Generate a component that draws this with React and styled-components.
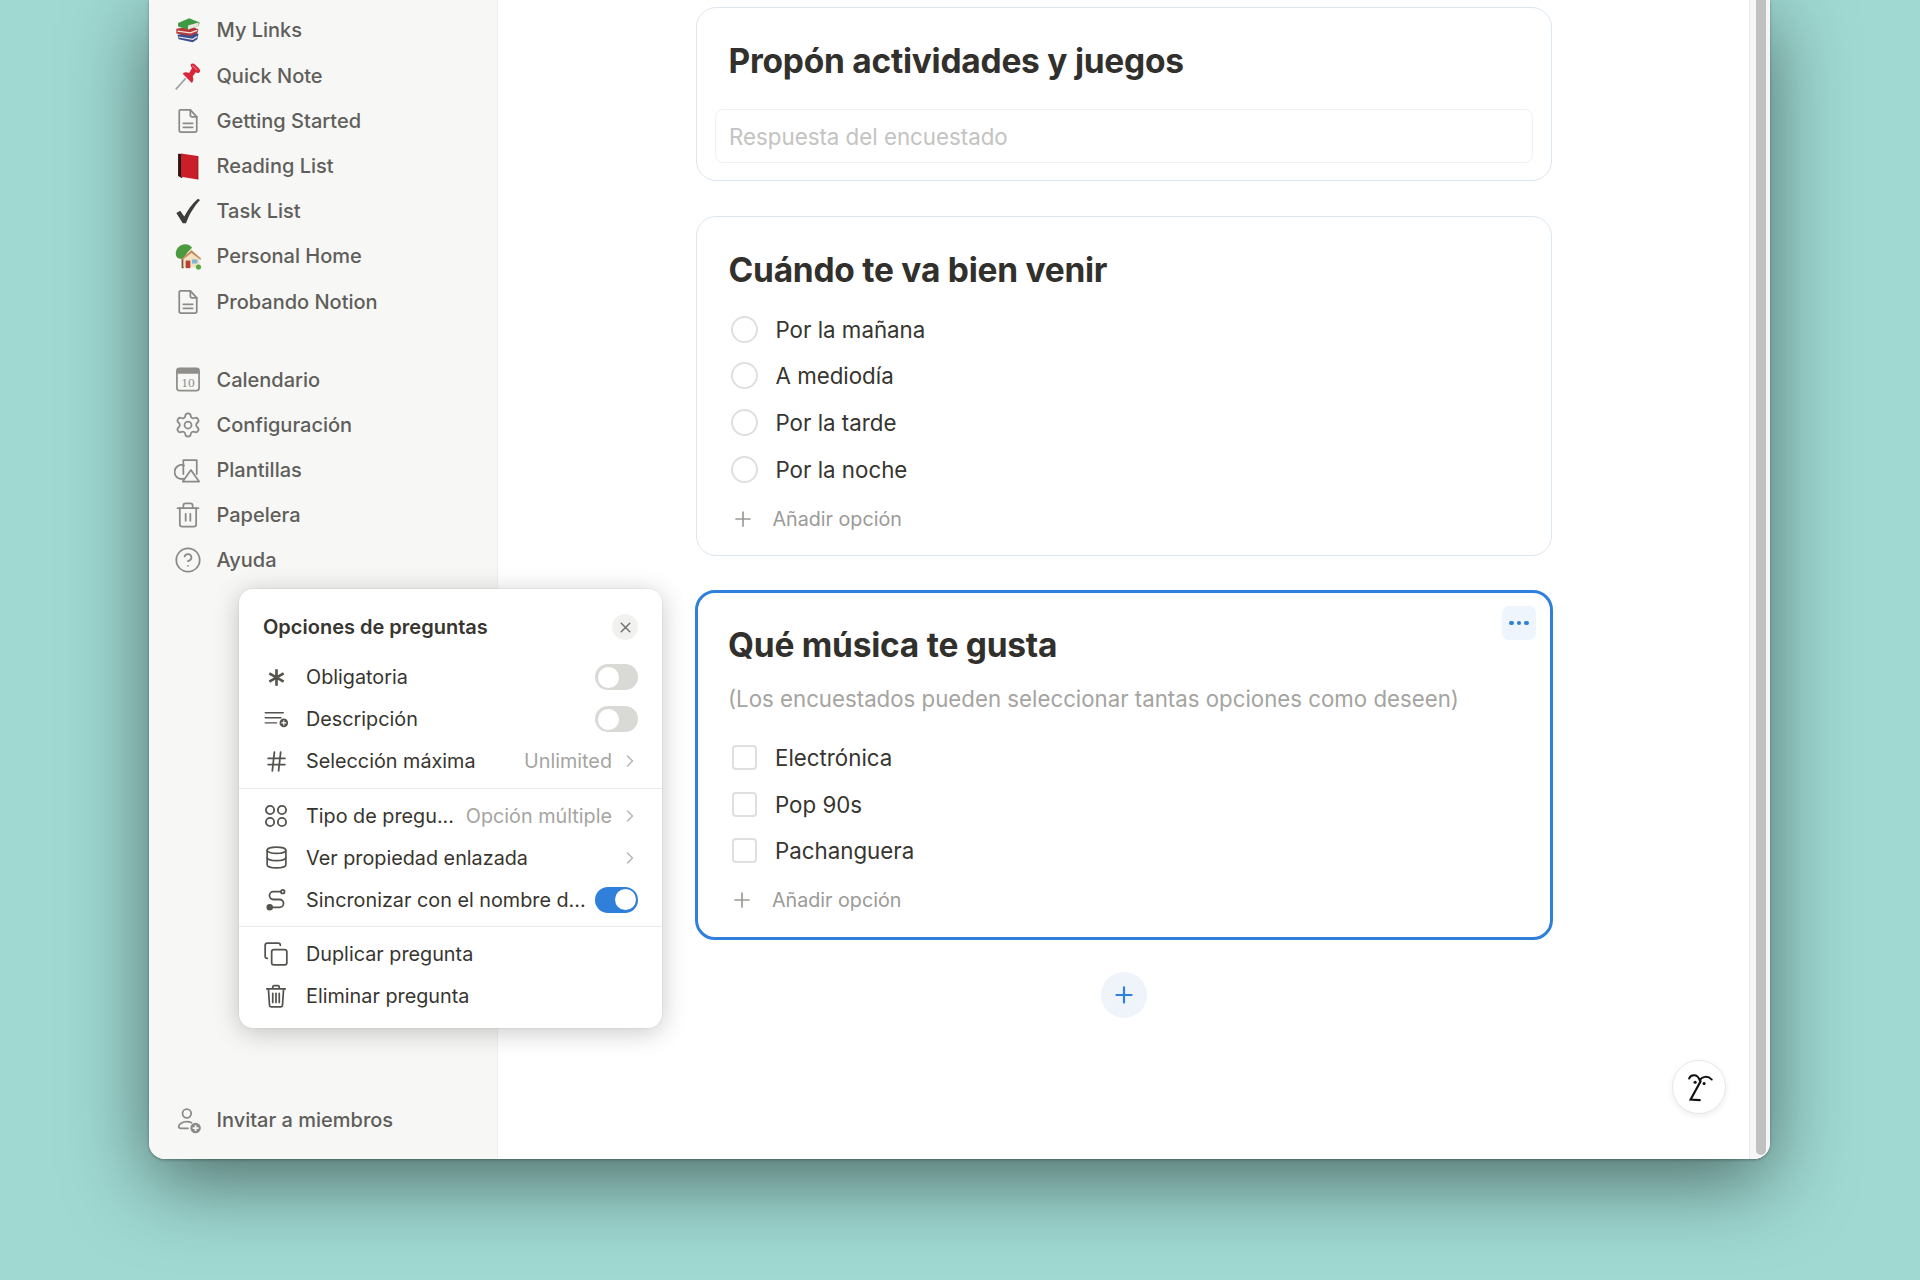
import React from 'react';
import styled, { createGlobalStyle } from 'styled-components';
import { Settings, CircleHelp, Trash2, Hash, Database, Copy, X, Plus, ChevronRight } from 'lucide-react';

const GlobalStyle = createGlobalStyle`
  html, body {
    margin: 0;
    height: 1280px;
    overflow: hidden;
    background: #9fd9d2;
    font-family: Inter, "Liberation Sans", sans-serif;
    -webkit-font-smoothing: antialiased;
  }
  * { box-sizing: border-box; }
`;

const Stage = styled.div`
  height: 1280px;
  padding-left: 149px;
  background: #9fd9d2;
`;
const Window = styled.div`
  position: relative;
  display: flex;
  width: 1621px;
  height: 1159px;
  background: #fff;
  border-radius: 0 0 16px 16px;
  box-shadow: 0 22px 80px rgba(0, 0, 0, 0.5), 0 1px 3px rgba(0, 0, 0, 0.3);
`;

const Sidebar = styled.aside`
  display: flex;
  flex-direction: column;
  flex: 0 0 349px;
  height: 100%;
  padding: 7.8px 0 16px 25px;
  background: #f7f7f5;
  border-right: 1px solid #f0f0ee;
  border-radius: 0 0 0 16px;
`;
const NavGroup = styled.div`
  margin-bottom: ${p => p.$gap || 0}px;
`;
const NavRow = styled.div`
  display: flex;
  align-items: center;
  gap: 14.5px;
  height: 45.2px;
  color: #5f5e5b;
  font-size: 20px;
  font-weight: 500;
`;
const NavIcon = styled.span`
  display: flex;
  align-items: center;
  justify-content: center;
  width: 28px;
  height: 28px;
  color: #8b8a87;
`;
const Invite = styled(NavRow)`
  margin-top: auto;
`;

const Main = styled.main`
  display: flex;
  flex: 1;
  min-width: 0;
`;
const Content = styled.div`
  flex: 1;
  padding: 7px 0 0 198px;
`;
const Card = styled.section`
  width: ${p => (p.$active ? 858 : 856)}px;
  margin: 0 ${p => (p.$active ? -1 : 0)}px ${p => p.$after}px;
  padding: ${p => (p.$active ? '30.5px 18px 13.5px 30px' : '31px 18px 13px 31.5px')};
  background: #fff;
  border: ${p => (p.$active ? '3.5px solid #2f7fdb' : '1.5px solid #dde7f0')};
  border-radius: 20px;
  position: relative;
`;
const Title = styled.h2`
  margin: 0;
  color: #32302c;
  font-size: 33.5px;
  line-height: 44px;
  font-weight: 700;
  letter-spacing: -0.25px;
`;
const AnswerBox = styled.div`
  display: flex;
  align-items: center;
  height: 54px;
  margin: 26px 0 4px -14px;
  padding: 1px 0 0 13.5px;
  border: 1.5px solid #f0f0ee;
  border-radius: 8px;
  color: #c3c3c1;
  font-size: 22.3px;
`;
const Hint = styled.p`
  margin: 16px 0 18.7px;
  color: #a5a4a1;
  font-size: 22.25px;
  line-height: 32px;
`;
const Options = styled.div`
  margin-top: ${p => p.$top || 0}px;
`;
const Option = styled.div`
  display: flex;
  align-items: center;
  gap: ${p => (p.$square ? 18 : 17.5)}px;
  height: 46.6px;
  padding-left: ${p => (p.$square ? 4 : 2.5)}px;
  color: #37352f;
  font-size: 22.3px;
`;
const Radio = styled.span`
  width: 27px;
  height: 27px;
  border: 2px solid #dfdfdd;
  border-radius: 50%;
`;
const Check = styled.span`
  width: 25px;
  height: 25px;
  border: 2px solid #dfdfdd;
  border-radius: 4px;
`;
const AddOption = styled.div`
  display: flex;
  align-items: center;
  gap: 16px;
  height: 46.6px;
  margin-top: 3px;
  color: #9b9a97;
  font-size: 19.7px;
`;
const PlusBox = styled.span`
  display: flex;
  justify-content: center;
  width: 28px;
`;
const DotsButton = styled.button`
  position: absolute;
  top: 13px;
  right: 14px;
  display: flex;
  align-items: center;
  justify-content: center;
  gap: 3px;
  width: 34px;
  height: 34px;
  padding: 0;
  border: 0;
  border-radius: 7px;
  background: #eff5fc;
`;
const Dot = styled.i`
  width: 4.5px;
  height: 4.5px;
  border-radius: 50%;
  background: #2f7fdb;
`;
const AddQuestion = styled.button`
  display: flex;
  align-items: center;
  justify-content: center;
  width: 46px;
  height: 46px;
  margin-left: 405px;
  padding: 0;
  border: 0;
  border-radius: 50%;
  background: #eef4fa;
  color: #2f7fdb;
`;

const Gutter = styled.div`
  flex: 0 0 21px;
  padding: 0 4px 4px 6px;
  background: #f6f6f6;
  border-left: 1px solid #ececec;
  border-radius: 0 0 16px 0;
`;
const Thumb = styled.div`
  height: 100%;
  background: #c1c1c1;
  border-radius: 0 0 6px 6px;
`;

const HelpBubble = styled.button`
  position: absolute;
  right: 44px;
  bottom: 45px;
  width: 54px;
  height: 54px;
  padding: 0;
  background: #fff;
  border: 1px solid #e8e8e6;
  border-radius: 50%;
  box-shadow: 0 2px 6px rgba(0, 0, 0, 0.08);
`;

const Popover = styled.div`
  position: absolute;
  top: 589px;
  left: 90px;
  width: 423px;
  padding: 17px 24px 11px 24px;
  background: #fff;
  border-radius: 14px;
  box-shadow: 0 0 0 1px rgba(0, 0, 0, 0.03), 0 4px 26px rgba(0, 0, 0, 0.22);
`;
const PopHeader = styled.div`
  display: flex;
  align-items: center;
  justify-content: space-between;
  height: 42px;
  margin-bottom: 8px;
  color: #37352f;
  font-size: 20px;
  font-weight: 600;
`;
const CloseButton = styled.button`
  display: flex;
  align-items: center;
  justify-content: center;
  width: 26px;
  height: 26px;
  padding: 0;
  border: 0;
  border-radius: 50%;
  background: #f1f1ef;
  color: #6f6e6b;
`;
const PopRow = styled.div`
  display: flex;
  align-items: center;
  gap: 16px;
  height: 42px;
  margin-left: -1px;
  color: #37352f;
  font-size: 19.8px;
`;
const PopIcon = styled.span`
  display: flex;
  align-items: center;
  justify-content: center;
  flex: 0 0 28px;
  height: 28px;
  color: #55534e;
`;
const PopLabel = styled.span`
  flex: 1;
  min-width: 0;
  white-space: nowrap;
`;
const PopValue = styled.span`
  flex: none;
  margin-left: -6px;
  color: #a5a4a1;
  white-space: nowrap;
`;
const Chevron = styled(ChevronRight)`
  flex: 0 0 20px;
  margin: 0 -2px 0 -8px;
  color: #b3b2af;
`;
const Divider = styled.hr`
  height: 1px;
  margin: 5.5px -24px 6px -24px;
  border: 0;
  background: #ebebe9;
`;
const Toggle = styled.span`
  display: flex;
  justify-content: ${p => (p.$on ? 'flex-end' : 'flex-start')};
  align-items: center;
  flex: 0 0 43px;
  height: 26px;
  padding: 2.5px;
  border-radius: 13px;
  background: ${p => (p.$on ? '#2f7fdb' : '#d9d9d6')};
`;
const Knob = styled.i`
  width: 21px;
  height: 21px;
  border-radius: 50%;
  background: #fff;
`;

const Svg = ({ size = 28, children, ...rest }) => (
  <svg width={size} height={size} viewBox="0 0 24 24" fill="none" stroke="currentColor" strokeWidth="1.5" strokeLinecap="round" strokeLinejoin="round" {...rest}>
    {children}
  </svg>
);

const DocIcon = () => (
  <Svg size={28}>
    <path d="M5.500 2.500h8.500l5.500 6V20a1.600 1.600 0 0 1-1.600 1.600H6.100A1.600 1.600 0 0 1 4.500 20V3.500a1 1 0 0 1 1-1z" />
    <path d="M14 2.500v4.400a1.600 1.600 0 0 0 1.600 1.600h3.900M8 14h8M8 17.400h8" />
  </Svg>
);
const BooksIcon = () => (
  <svg width="30" height="30" viewBox="0 0 24 24">
    <path d="M3 16l14-2.500 4 2-1 4.500-4 2.500-12-2.500z" fill="#3b4f8f" />
    <path d="M4 18l12 2 4-2.500" stroke="#e8e8ee" strokeWidth="1" fill="none" />
    <path d="M2 11l13-2.500 6 3-1 3-6 2.500L2 15z" fill="#b9393a" />
    <path d="M3 13l11 1.500 6-2.200" stroke="#efe6e0" strokeWidth="1" fill="none" />
    <path d="M3.500 6l9.500-4 9 3.500-1 3-9 3-8.500-2.500z" fill="#3e9a42" />
    <path d="M12 8.200l9-2.700v3l-9 3z" fill="#e9e7dc" />
  </svg>
);
const PinIcon = () => (
  <svg width="30" height="30" viewBox="0 0 24 24">
    <path d="M1.500 23.500l8.500-9.500" stroke="#9ea3a8" strokeWidth="1.400" />
    <path d="M14.500 1.800c1-1 2.500-.7 3.500.3l3.500 3.500c1 1 1.200 2.500.2 3.300-1 .8-2 .6-3-.2l-2.700 3.800c1 2.200.7 4-.7 5.500L7.500 10c1.700-1.500 3.500-1.500 5.500-.6l2.500-4.200c-1-1-1.500-2.300-1-3.400z" fill="#d7263a" />
    <path d="M15.500 3l4.500 4" stroke="#f06a76" strokeWidth="1" />
  </svg>
);
const RedBookIcon = () => (
  <svg width="30" height="30" viewBox="0 0 24 24">
    <path d="M3.500 1.500l3.500.3v20.700l-3.500-2z" fill="#2c1414" />
    <path d="M6 1.300L20.500 3.500v20L6 21.200z" fill="#c81f28" />
    <path d="M20.500 3.500v20" stroke="#8e1219" strokeWidth=".8" />
  </svg>
);
const CheckIcon = () => (
  <svg width="30" height="30" viewBox="0 0 24 24" fill="#3c3c3a">
    <path d="M2 13.800l3.300-2 3.500 5C11.800 11 15.500 6 20.500 1.500l1.800 1C16.500 9 13 15 10.300 22.500H7.500z" />
  </svg>
);
const HomeIcon = () => (
  <svg width="33" height="33" viewBox="0 0 24 24">
    <path d="M6.500 13h2v9h-2z" fill="#7a5230" />
    <path d="M1.500 9.500C1.500 5 5.500 1.500 9.500 1.500c3 0 5 1.500 6 3l-4 4-3 5c-2.500 1-7 .5-7-4z" fill="#4c9a3f" />
    <path d="M8 21.500V13l7-5.500 7 5.500v8.500z" fill="#f1e2c6" />
    <path d="M6.500 14L15 6.500l8 7v1.500l-8-6-8.500 6.500z" fill="#c68a5d" />
    <path d="M10 15.500h4v6.500h-4z" fill="#b44234" />
    <path d="M15.500 14.500h4.500v3.500h-4.500z" fill="#7fb4d6" />
    <circle cx="21" cy="21" r="2.200" fill="#55a83f" />
  </svg>
);
const CalendarIcon = () => (
  <svg width="29" height="29" viewBox="0 0 24 24" fill="none">
    <rect x="2.500" y="2.500" width="19" height="19" rx="2.200" stroke="#8f8e8b" strokeWidth="1.500" />
    <path d="M2.500 4.700a2.200 2.200 0 0 1 2.200-2.200h14.600a2.200 2.200 0 0 1 2.200 2.200v2.300h-19z" fill="#8f8e8b" />
    <text x="12" y="18.300" textAnchor="middle" fontFamily="Liberation Serif, serif" fontSize="11.500" fill="#8f8e8b">10</text>
  </svg>
);
const TemplatesIcon = () => (
  <Svg size={29}>
    <path d="M8.500 7.600a6 6 0 1 0 0 11.300" />
    <path d="M8 15V3h11.500v12" />
    <path d="M14.500 11.500L21.500 21.500H7.500z" fill="#f7f7f5" />
  </Svg>
);
const InviteIcon = () => (
  <svg width="29" height="29" viewBox="0 0 24 24" fill="none" stroke="#8b8a87" strokeWidth="1.500">
    <circle cx="11" cy="6" r="3.700" />
    <path d="M15 14c-1.200-.7-2.500-1-4-1-3.800 0-7 2-7 4.200 0 1 .8 1.600 2 1.600h6" strokeLinecap="round" />
    <circle cx="18.500" cy="18.500" r="4.500" fill="#8b8a87" stroke="none" />
    <path d="M18.500 16v5M16 18.500h5" stroke="#f7f7f5" />
  </svg>
);
const AsteriskIcon = () => (
  <Svg size={21} strokeWidth="3" strokeLinecap="butt">
    <path d="M12 2.500v19M3.800 7.200l16.400 9.600M20.200 7.200L3.800 16.800" />
  </Svg>
);
const DescriptionIcon = () => (
  <Svg size={27} strokeWidth="1.300">
    <path d="M2 6h16M2 10.500h14M2 15h10" />
    <circle cx="18.500" cy="15" r="3.800" fill="#55534e" stroke="none" />
    <path d="M18.500 13.200v3.600M16.700 15h3.600" stroke="#fff" strokeWidth="1" />
  </Svg>
);
const GroupIcon = () => (
  <Svg size={26} strokeWidth="1.700">
    <circle cx="6.500" cy="6.500" r="3.800" />
    <circle cx="17.500" cy="6.500" r="3.800" />
    <circle cx="6.500" cy="17.500" r="3.800" />
    <circle cx="17.500" cy="17.500" r="3.800" />
  </Svg>
);
const SyncIcon = () => (
  <Svg size={25} strokeWidth="1.700">
    <path d="M16 4.500H9a3.700 3.700 0 0 0 0 7.500h6a3.700 3.700 0 0 1 0 7.500H7" />
    <circle cx="18" cy="4.500" r="1.700" />
    <circle cx="5.500" cy="19.500" r="2.300" fill="currentColor" />
  </Svg>
);
const BinIcon = () => (
  <Svg size={26} strokeWidth="1.600">
    <path d="M3.500 5.500h17M9 5.500V3.800a1.300 1.300 0 0 1 1.300-1.300h3.400A1.300 1.300 0 0 1 15 3.800v1.700" />
    <path d="M5 5.500l1 15a1.500 1.500 0 0 0 1.500 1.500h9a1.500 1.500 0 0 0 1.500-1.500l1-15" />
    <path d="M9 9.500v8.500M12 9.500v8.500M15 9.500v8.500" />
  </Svg>
);
const FaceIcon = () => (
  <svg width="52" height="52" viewBox="0 0 54 54" fill="none" stroke="#111" strokeWidth="2" strokeLinecap="round">
    <path d="M16.700 18.300C18 14.500 25 12 27.700 20C30 16 36 14.800 40.300 19.300" />
    <path d="M28.700 21L18.300 40L27.700 40.700" strokeWidth="2.300" />
    <circle cx="23" cy="22" r="1.600" fill="#111" stroke="none" />
    <circle cx="32.300" cy="23.300" r="1.600" fill="#111" stroke="none" />
  </svg>
);

const pages = [
  ['My Links', <BooksIcon />],
  ['Quick Note', <PinIcon />],
  ['Getting Started', <DocIcon />],
  ['Reading List', <RedBookIcon />],
  ['Task List', <CheckIcon />],
  ['Personal Home', <HomeIcon />],
  ['Probando Notion', <DocIcon />],
];
const tools = [
  ['Calendario', <CalendarIcon />],
  ['Configuración', <Settings size={28} strokeWidth={1.5} />],
  ['Plantillas', <TemplatesIcon />],
  ['Papelera', <Trash2 size={28} strokeWidth={1.5} />],
  ['Ayuda', <CircleHelp size={28} strokeWidth={1.5} />],
];

const AddRow = () => (
  <AddOption>
    <PlusBox><Plus size={24} strokeWidth={1.7} /></PlusBox>
    Añadir opción
  </AddOption>
);

export default function App() {
  return (
    <Stage>
      <GlobalStyle />
      <Window>
        <Sidebar>
          <NavGroup $gap={33}>
            {pages.map(([label, icon]) => (
              <NavRow key={label}><NavIcon>{icon}</NavIcon>{label}</NavRow>
            ))}
          </NavGroup>
          <NavGroup>
            {tools.map(([label, icon]) => (
              <NavRow key={label}><NavIcon>{icon}</NavIcon>{label}</NavRow>
            ))}
          </NavGroup>
          <Invite><NavIcon><InviteIcon /></NavIcon>Invitar a miembros</Invite>
        </Sidebar>

        <Main>
          <Content>
            <Card $after={35}>
              <Title>Propón actividades y juegos</Title>
              <AnswerBox>Respuesta del encuestado</AnswerBox>
            </Card>
            <Card $after={34}>
              <Title>Cuándo te va bien venir</Title>
              <Options $top={14}>
                {['Por la mañana', 'A mediodía', 'Por la tarde', 'Por la noche'].map(t => (
                  <Option key={t}><Radio />{t}</Option>
                ))}
              </Options>
              <AddRow />
            </Card>
            <Card $active $after={32}>
              <DotsButton><Dot /><Dot /><Dot /></DotsButton>
              <Title>Qué música te gusta</Title>
              <Hint>(Los encuestados pueden seleccionar tantas opciones como deseen)</Hint>
              <Options>
                {['Electrónica', 'Pop 90s', 'Pachanguera'].map(t => (
                  <Option key={t} $square><Check />{t}</Option>
                ))}
              </Options>
              <AddRow />
            </Card>
            <AddQuestion><Plus size={26} strokeWidth={2} /></AddQuestion>
          </Content>
          <Gutter><Thumb /></Gutter>
        </Main>

        <HelpBubble><FaceIcon /></HelpBubble>

        <Popover>
          <PopHeader>
            Opciones de preguntas
            <CloseButton><X size={17} strokeWidth={2} /></CloseButton>
          </PopHeader>
          <PopRow>
            <PopIcon><AsteriskIcon /></PopIcon>
            <PopLabel>Obligatoria</PopLabel>
            <Toggle><Knob /></Toggle>
          </PopRow>
          <PopRow>
            <PopIcon><DescriptionIcon /></PopIcon>
            <PopLabel>Descripción</PopLabel>
            <Toggle><Knob /></Toggle>
          </PopRow>
          <PopRow>
            <PopIcon><Hash size={25} strokeWidth={1.7} /></PopIcon>
            <PopLabel>Selección máxima</PopLabel>
            <PopValue>Unlimited</PopValue>
            <Chevron size={20} strokeWidth={1.6} />
          </PopRow>
          <Divider />
          <PopRow>
            <PopIcon><GroupIcon /></PopIcon>
            <PopLabel>Tipo de pregu...</PopLabel>
            <PopValue>Opción múltiple</PopValue>
            <Chevron size={20} strokeWidth={1.6} />
          </PopRow>
          <PopRow>
            <PopIcon><Database size={25} strokeWidth={1.6} /></PopIcon>
            <PopLabel>Ver propiedad enlazada</PopLabel>
            <Chevron size={20} strokeWidth={1.6} />
          </PopRow>
          <PopRow>
            <PopIcon><SyncIcon /></PopIcon>
            <PopLabel>Sincronizar con el nombre d...</PopLabel>
            <Toggle $on><Knob /></Toggle>
          </PopRow>
          <Divider />
          <PopRow>
            <PopIcon><Copy size={26} strokeWidth={1.6} /></PopIcon>
            <PopLabel>Duplicar pregunta</PopLabel>
          </PopRow>
          <PopRow>
            <PopIcon><BinIcon /></PopIcon>
            <PopLabel>Eliminar pregunta</PopLabel>
          </PopRow>
        </Popover>
      </Window>
    </Stage>
  );
}
